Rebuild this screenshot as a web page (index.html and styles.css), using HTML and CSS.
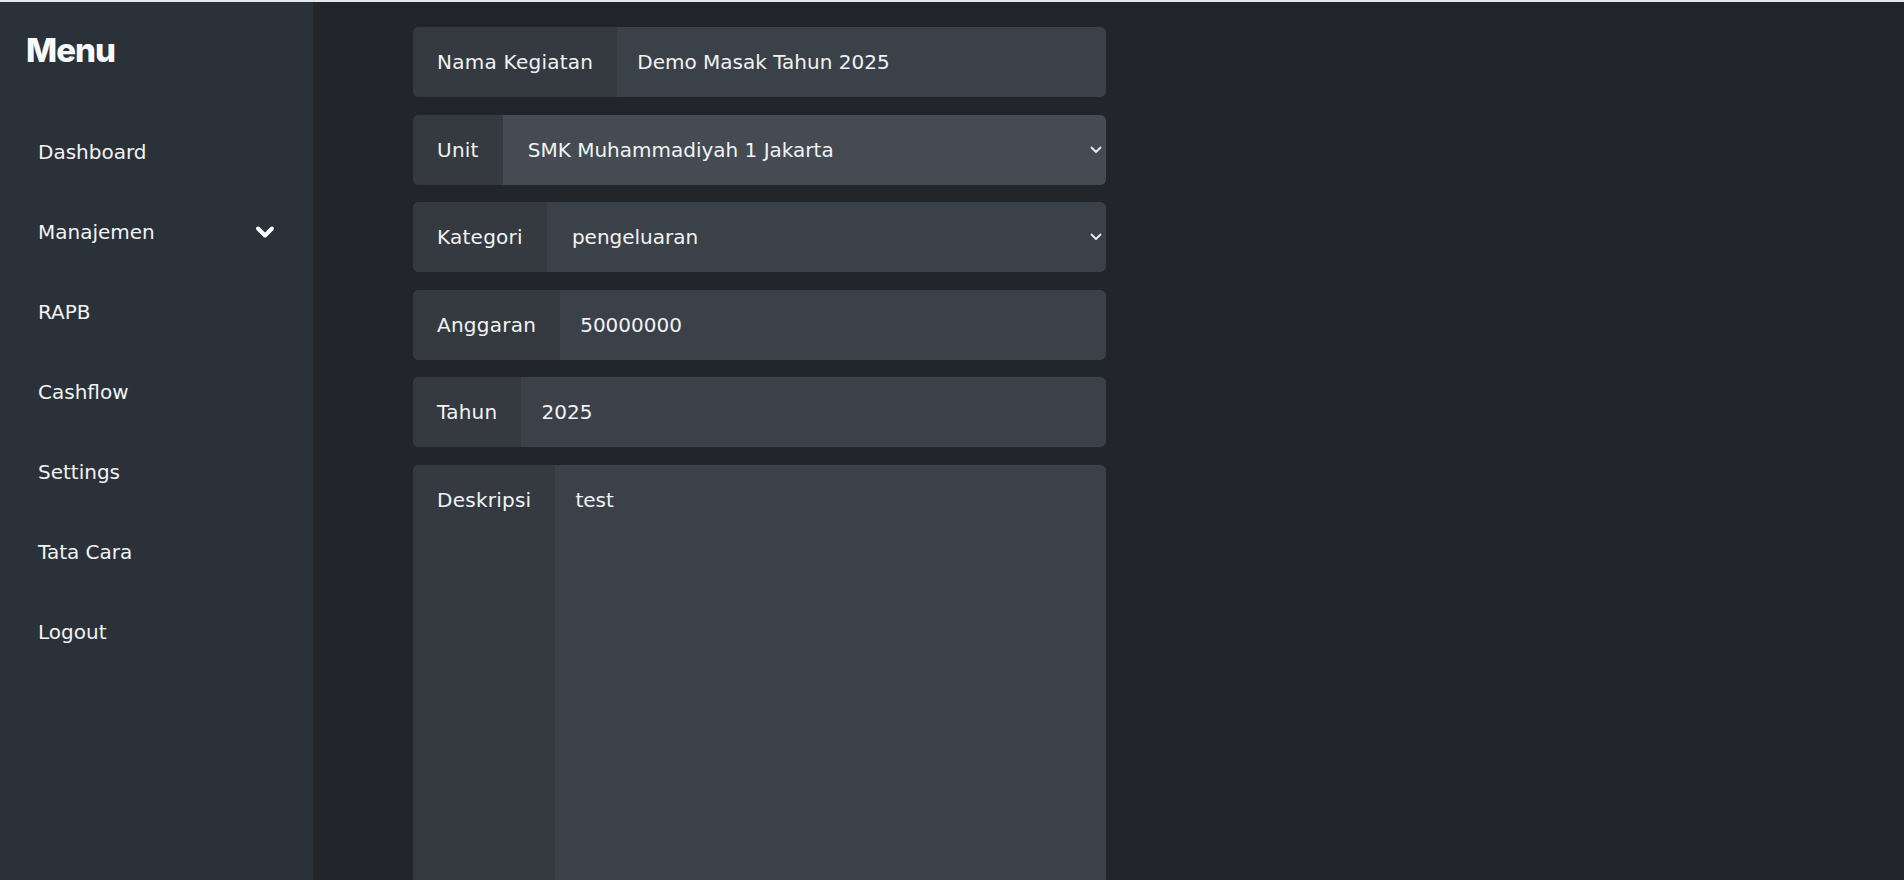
FILE: index.html
```html
<!DOCTYPE html>
<html lang="id">
<head>
<meta charset="utf-8">
<title>Tambah Kegiatan</title>
<link rel="stylesheet" href="styles.css">
</head>
<body>
<div class="topline"></div>
<div class="app">
  <aside class="sidebar">
    <h1 class="brand">Menu</h1>
    <nav class="nav">
      <a class="nav-link" href="#">Dashboard</a>
      <a class="nav-link has-sub" href="#">Manajemen
        <svg class="chev" width="20" height="14" viewBox="0 0 20 14"><polyline points="3,3.5 10,10.5 17,3.5" fill="none" stroke="#ffffff" stroke-width="4" stroke-linecap="round" stroke-linejoin="round"/></svg>
      </a>
      <a class="nav-link" href="#">RAPB</a>
      <a class="nav-link" href="#">Cashflow</a>
      <a class="nav-link" href="#">Settings</a>
      <a class="nav-link" href="#">Tata Cara</a>
      <a class="nav-link" href="#">Logout</a>
    </nav>
  </aside>
  <main class="main">
    <form class="form">
      <div class="group">
        <span class="label">Nama Kegiatan</span>
        <input class="control" type="text" value="Demo Masak Tahun 2025">
      </div>
      <div class="group">
        <span class="label">Unit</span>
        <div class="select-wrap">
          <select class="control select select-active">
            <option>SMK Muhammadiyah 1 Jakarta</option>
          </select>
          <svg class="caret" width="12" height="8" viewBox="0 0 12 8"><polyline points="1.5,1.5 6,6 10.5,1.5" fill="none" stroke="#e9ecef" stroke-width="1.8" stroke-linecap="round" stroke-linejoin="round"/></svg>
        </div>
      </div>
      <div class="group">
        <span class="label">Kategori</span>
        <div class="select-wrap">
          <select class="control select">
            <option>pengeluaran</option>
          </select>
          <svg class="caret" width="12" height="8" viewBox="0 0 12 8"><polyline points="1.5,1.5 6,6 10.5,1.5" fill="none" stroke="#e9ecef" stroke-width="1.8" stroke-linecap="round" stroke-linejoin="round"/></svg>
        </div>
      </div>
      <div class="group">
        <span class="label">Anggaran</span>
        <input class="control" type="text" value="50000000">
      </div>
      <div class="group">
        <span class="label">Tahun</span>
        <input class="control" type="text" value="2025">
      </div>
      <div class="group group-area">
        <span class="label">Deskripsi</span>
        <textarea class="control area">test</textarea>
      </div>
    </form>
  </main>
</div>
</body>
</html>
```
FILE: styles.css
```css
* { box-sizing: border-box; }
html, body { margin: 0; padding: 0; }
body {
  background: #222529;
  color: #f1f3f5;
  font-family: "DejaVu Sans", Inter, sans-serif;
  overflow: hidden;
  height: 880px;
}
.topline {
  height: 2px;
  background: #e6e7ea;
}
.app {
  display: flex;
  height: 878px;
  overflow: hidden;
}
.sidebar {
  width: 313px;
  flex: 0 0 313px;
  background: #2b3138;
  padding: 28px 26px 0 26px;
}
.brand {
  margin: 0;
  font-family: Inter, "DejaVu Sans", sans-serif;
  font-size: 33px;
  line-height: 40px;
  font-weight: 800;
  color: #f8f9fa;
  letter-spacing: -1px;
}
.nav {
  display: flex;
  flex-direction: column;
  margin-top: 41.5px;
}
.nav-link {
  display: flex;
  align-items: center;
  justify-content: space-between;
  height: 80px;
  padding: 0 12px;
  color: #f1f3f5;
  text-decoration: none;
  font-size: 20px;
  line-height: 30px;
}
.chev { margin-right: 0; }
.main {
  flex: 1;
  padding: 25px 0 0 100px;
}
.form {
  width: 693px;
  display: flex;
  flex-direction: column;
  gap: 17.6px;
}
.group {
  display: flex;
  height: 70px;
  border-radius: 6px;
  overflow: hidden;
  background: #3b4148;
}
.label {
  display: flex;
  align-items: center;
  padding: 0 24px;
  background: #343a40;
  font-size: 20px;
  line-height: 30px;
  letter-spacing: 0.25px;
  color: #f1f3f5;
  white-space: nowrap;
}
.control {
  flex: 1;
  min-width: 0;
  border: 0;
  outline: 0;
  margin: 0;
  background: #3b4148;
  color: #f1f3f5;
  font-family: inherit;
  font-size: 20px;
  line-height: 30px;
  padding: 20px 20px;
}
.select-wrap {
  flex: 1;
  display: flex;
  position: relative;
}
.select {
  appearance: none;
  -webkit-appearance: none;
  padding-left: 25px;
  height: 70px;
}
.select-active { background: #444b53; }
.caret {
  position: absolute;
  right: 4px;
  top: 31px;
}
.group-area {
  height: 560px;
}
.group-area .label {
  align-items: flex-start;
  padding-top: 20px;
}
.area {
  resize: none;
  padding: 20px 20px;
}
```
